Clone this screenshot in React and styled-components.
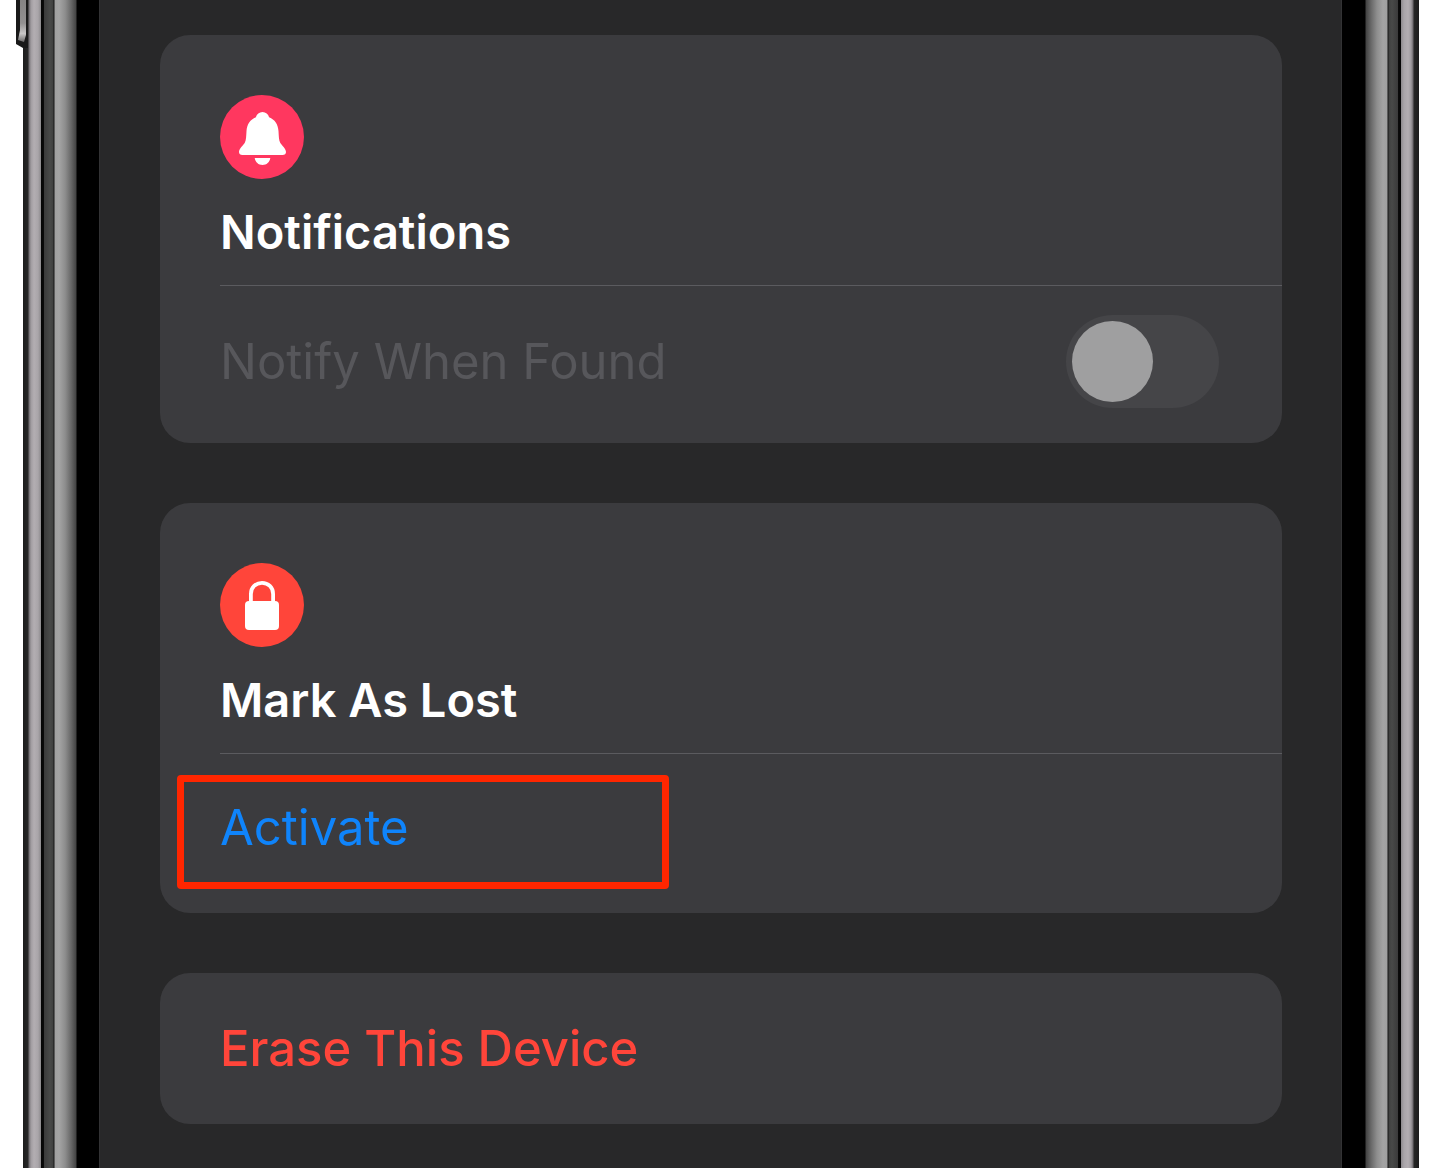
import React from "react";
import styled, { createGlobalStyle } from "styled-components";

const GlobalStyle = createGlobalStyle`
  * {
    box-sizing: border-box;
  }
  body {
    margin: 0;
    background: #ffffff;
    font-family: Inter, "Liberation Sans", sans-serif;
  }
`;

const Phone = styled.div`
  position: relative;
  display: flex;
  min-height: 100vh;
  padding: 0 24px 0 23px;
`;

const Rail = styled.div`
  flex: 0 0 ${(p) => (p.$side === "left" ? "76px" : "77px")};
  background: linear-gradient(
    to ${(p) => (p.$side === "left" ? "right" : "left")},
    #1c1c1c 0,
    #262626 5px,
    #6f6b6f 6px,
    #a09ca0 8px,
    #b3aeb2 11px,
    #a9a5a9 15px,
    #8d8a8d 18px,
    #050505 18px,
    #0b0b0b 21px,
    #3a3a3a 21px,
    #484948 27px,
    #404140 30px,
    #161616 31px,
    #a0a0a0 32px,
    #a4a4a4 36px,
    #8e8e8e 42px,
    #686868 48px,
    #434343 53px,
    #000000 54px,
    #000000 100%
  );
`;

const SideButton = styled.svg`
  position: absolute;
  top: 0;
  left: 16px;
`;

const Screen = styled.main`
  flex: 1;
  display: flex;
  flex-direction: column;
  gap: 60px;
  padding: 35px 59px 44px 60px;
  background: #282829;
  border: solid #323234;
  border-width: 0 1px;
`;

const Card = styled.section`
  background: #3b3b3e;
  border-radius: 30px;
`;

const CardHeader = styled.header`
  margin-left: 60px;
  padding: 60px 0 23px;
  border-bottom: 1px solid #5b5b5f;
`;

const Badge = styled.svg`
  display: block;
  width: 84px;
  height: 84px;
  border-radius: 50%;
  background: ${(p) => p.$color};
`;

const Title = styled.h2`
  margin: 23px 0 0;
  color: #ffffff;
  font-size: 47px;
  font-weight: 600;
  line-height: 60px;
`;

const ToggleRow = styled.div`
  display: flex;
  align-items: center;
  justify-content: space-between;
  padding: 29px 63px 35px 60px;
`;

const ToggleLabel = styled.label`
  color: #57575b;
  font-size: 49px;
  line-height: 60px;
`;

const Toggle = styled.input`
  appearance: none;
  flex: none;
  display: flex;
  width: 153px;
  height: 93px;
  margin: 0;
  padding: 6px;
  border-radius: 47px;
  background: #454548;

  &::before {
    content: "";
    width: 81px;
    height: 81px;
    border-radius: 50%;
    background: #9f9fa0;
  }
`;

const ActionRow = styled.div`
  position: relative;
  display: flex;
  padding: ${(p) => p.$padding};
`;

const Action = styled.button`
  flex: 1;
  padding: 0;
  border: 0;
  background: none;
  color: ${(p) => p.$color};
  font: ${(p) => p.$weight} 49px/60px Inter, "Liberation Sans", sans-serif;
  text-align: left;
`;

const Highlight = styled.span`
  position: absolute;
  top: 21px;
  left: 17px;
  width: 492px;
  height: 114px;
  border: 7px solid #ff2600;
  border-radius: 4px;
  pointer-events: none;
`;

function BellBadge() {
  return (
    <Badge viewBox="0 0 84 84" $color="#ff375f" aria-hidden="true">
      <path
        fill="#fff"
        d="M42.5 17C39.2 17 36.8 19.2 35.9 22.2C30.2 24.4 26.9 29.4 26.5 36C26.2 41 26.2 44.8 24.8 47.8C23.3 50.6 19 53.4 19 57C19 58.9 20.3 60 22.4 60H62.6C64.7 60 66 58.9 66 57C66 53.4 61.7 50.6 60.2 47.8C58.8 44.8 58.8 41 58.5 36C58.1 29.4 54.8 24.4 49.1 22.2C48.2 19.2 45.8 17 42.5 17Z"
      />
      <path fill="#fff" d="M34.7 63H50.3C49.8 67.2 46.5 70 42.5 70C38.500 70 35.2 67.2 34.7 63Z" />
    </Badge>
  );
}

function LockBadge() {
  return (
    <Badge viewBox="0 0 84 84" $color="#ff453a" aria-hidden="true">
      <path
        fill="none"
        stroke="#fff"
        strokeWidth="3.8"
        d="M30.9 40V31C30.9 24.4 35.8 19.9 42 19.9C48.2 19.9 53.1 24.4 53.1 31V40"
      />
      <rect x="25" y="38" width="34" height="29" rx="4" fill="#fff" />
    </Badge>
  );
}

export default function App() {
  return (
    <>
      <GlobalStyle />
      <Phone>
        <Rail $side="left" />
        <SideButton width="12" height="50" viewBox="0 0 12 50" aria-hidden="true">
          <defs>
            <linearGradient id="key" x1="0" x2="0" y1="0" y2="1">
              <stop offset="0" stopColor="#858383" />
              <stop offset="0.55" stopColor="#929090" />
              <stop offset="0.8" stopColor="#c9c7c7" />
              <stop offset="1" stopColor="#6a6868" />
            </linearGradient>
          </defs>
          <path d="M0 0H12V48H7L0 44Z" fill="#191919" />
          <path d="M4 0H10V35L8 42L2 40L4 30Z" fill="url(#key)" />
        </SideButton>
        <Screen>
          <Card>
            <CardHeader>
              <BellBadge />
              <Title>Notifications</Title>
            </CardHeader>
            <ToggleRow>
              <ToggleLabel htmlFor="notify">Notify When Found</ToggleLabel>
              <Toggle id="notify" type="checkbox" role="switch" disabled />
            </ToggleRow>
          </Card>
          <Card>
            <CardHeader>
              <LockBadge />
              <Title>Mark As Lost</Title>
            </CardHeader>
            <ActionRow $padding="44px 60px 55px">
              <Action type="button" $color="#0f84fb" $weight={400}>
                Activate
              </Action>
              <Highlight />
            </ActionRow>
          </Card>
          <Card>
            <ActionRow $padding="46px 60px 45px">
              <Action type="button" $color="#ff453a" $weight={500}>
                Erase This Device
              </Action>
            </ActionRow>
          </Card>
        </Screen>
        <Rail $side="right" />
      </Phone>
    </>
  );
}
